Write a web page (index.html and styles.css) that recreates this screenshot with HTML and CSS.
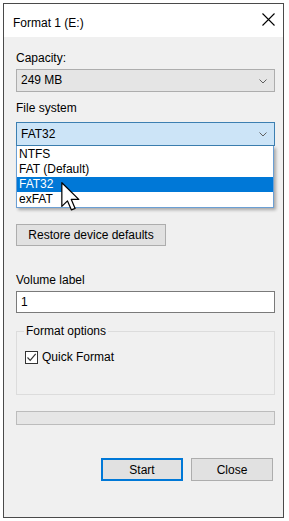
FILE: index.html
```html
<!DOCTYPE html>
<html>
<head>
<meta charset="utf-8">
<link rel="stylesheet" href="styles.css">
</head>
<body>
<div class="window">
  <div class="titlebar">
    <span class="title">Format 1 (E:)</span>
    <svg class="close-x" width="13" height="13" viewBox="0 0 13 13"><path d="M0.5 0.5 L12.5 12.5 M12.5 0.5 L0.5 12.5" stroke="#000" stroke-width="1.1" fill="none"/></svg>
  </div>
  <div class="content">
    <label class="lbl lbl-first">Capacity:</label>
    <div class="combo combo-disabled">
      <span>249 MB</span>
      <svg class="chev" width="8" height="5" viewBox="0 0 8 5"><path d="M0.5 0.5 L4 4 L7.5 0.5" stroke="#606060" fill="none"/></svg>
    </div>
    <label class="lbl lbl-fs">File system</label>
    <div class="combo-wrap">
      <div class="combo combo-open">
        <span>FAT32</span>
        <svg class="chev" width="8" height="5" viewBox="0 0 8 5"><path d="M0.5 0.5 L4 4 L7.5 0.5" stroke="#606060" fill="none"/></svg>
      </div>
      <ul class="dropdown">
        <li>NTFS</li>
        <li>FAT (Default)</li>
        <li class="sel">FAT32</li>
        <li>exFAT</li>
      </ul>
      <svg class="cursor" width="20" height="29" viewBox="0 0 13 19"><path d="M0.5 0.5 L0.5 16 L4.2 12.4 L6.8 18.3 L9.2 17.3 L6.7 11.4 L11.6 11.4 Z" fill="#fff" stroke="#000" stroke-width="0.8" stroke-linejoin="round"/></svg>
    </div>
    <button class="btn btn-restore">Restore device defaults</button>
    <label class="lbl lbl-vol">Volume label</label>
    <div class="textbox">1</div>
    <fieldset class="group">
      <legend>Format options</legend>
      <div class="check-row">
        <span class="checkbox"><svg width="11" height="11" viewBox="0 0 11 11"><path d="M1.5 5.5 L4.2 8.3 L9.7 1.8" stroke="#333" stroke-width="1.2" fill="none"/></svg></span>
        <span>Quick Format</span>
      </div>
    </fieldset>
    <div class="progress"></div>
    <div class="actions">
      <button class="btn btn-action btn-default">Start</button>
      <button class="btn btn-action">Close</button>
    </div>
  </div>
</div>
</body>
</html>
```
FILE: styles.css
```css
html, body {
  margin: 0;
  padding: 0;
  background: #ffffff;
}
body {
  font-family: "Liberation Sans", Arial, sans-serif;
  font-size: 12px;
  color: #000;
}
.window {
  margin: 3px;
  width: 281px;
  height: 515px;
  box-sizing: border-box;
  border: 1px solid #4a4a4a;
  display: flex;
  flex-direction: column;
}
.titlebar {
  height: 33px;
  flex: none;
  background: #fff;
  display: flex;
  justify-content: space-between;
  align-items: flex-start;
  padding: 0 8px 0 9px;
}
.title {
  line-height: 16px;
  margin-top: 11px;
}
.close-x {
  margin-top: 9px;
}
.content {
  flex: 1;
  background: #f0f0f0;
  padding: 13px 8px 0 12px;
  display: flex;
  flex-direction: column;
}
.lbl {
  display: block;
  line-height: 16px;
  height: 16px;
}
.lbl-fs { margin-top: 8px; }
.lbl-vol { margin-top: 26px; }
.combo {
  box-sizing: border-box;
  display: flex;
  align-items: center;
  justify-content: space-between;
  padding: 0 7px 0 4px;
}
.combo-disabled {
  margin-top: 3px;
  height: 23px;
  background: #e5e5e5;
  border: 1px solid #adadad;
  line-height: 21px;
}
.combo-wrap {
  position: relative;
  margin-top: 6px;
}
.combo-open {
  height: 24px;
  background: #cce4f7;
  border: 1px solid #3c7fb1;
  line-height: 22px;
}
.chev { display: block; margin-top: 1px; }
.dropdown {
  position: absolute;
  left: 0;
  top: 24px;
  width: 258px;
  box-sizing: border-box;
  margin: 0;
  padding: 0;
  list-style: none;
  background: #fff;
  border: 1px solid #6b9fd4;
  border-top: none;
  box-shadow: 2px 2px 3px rgba(0, 0, 0, 0.3);
  z-index: 2;
}
.dropdown li {
  height: 15px;
  line-height: 15px;
  padding-left: 2px;
}
.dropdown li:first-child { margin-top: 1px; }
.dropdown li.sel {
  background: #0078d7;
  color: #fff;
}
.cursor {
  position: absolute;
  left: 45px;
  top: 60px;
  z-index: 3;
}
.btn {
  font-family: "Liberation Sans", Arial, sans-serif;
  font-size: 12px;
  color: #000;
  background: #e1e1e1;
  border: 1px solid #adadad;
  box-sizing: border-box;
  margin: 0;
  padding: 0;
}
.btn-restore {
  margin-top: 78px;
  width: 150px;
  height: 22px;
  align-self: flex-start;
}
.textbox {
  margin-top: 3px;
  height: 22px;
  box-sizing: border-box;
  background: #fff;
  border: 1px solid #7a7a7a;
  line-height: 20px;
  padding-left: 4px;
}
.group {
  margin: 10px 0 0 0;
  border: 1px solid #dcdcdc;
  padding: 0 0 29px 7px;
  min-width: 0;
}
.group legend {
  padding: 0 2px;
  line-height: 16px;
}
.check-row {
  margin-top: 10px;
  display: flex;
  align-items: center;
  line-height: 16px;
  height: 16px;
}
.checkbox {
  width: 13px;
  height: 13px;
  box-sizing: border-box;
  border: 1px solid #333;
  background: #fff;
  margin-left: 1px;
  margin-right: 4px;
  display: flex;
  align-items: center;
  justify-content: center;
}
.checkbox svg { display: block; }
.progress {
  margin-top: 16px;
  height: 14px;
  box-sizing: border-box;
  background: #e6e6e6;
  border: 1px solid #bcbcbc;
}
.actions {
  margin-top: 33px;
  display: flex;
  justify-content: flex-end;
  gap: 8px;
  padding-right: 2px;
}
.btn-action {
  width: 82px;
  height: 23px;
}
.btn-default {
  border: 2px solid #0078d7;
}
```
